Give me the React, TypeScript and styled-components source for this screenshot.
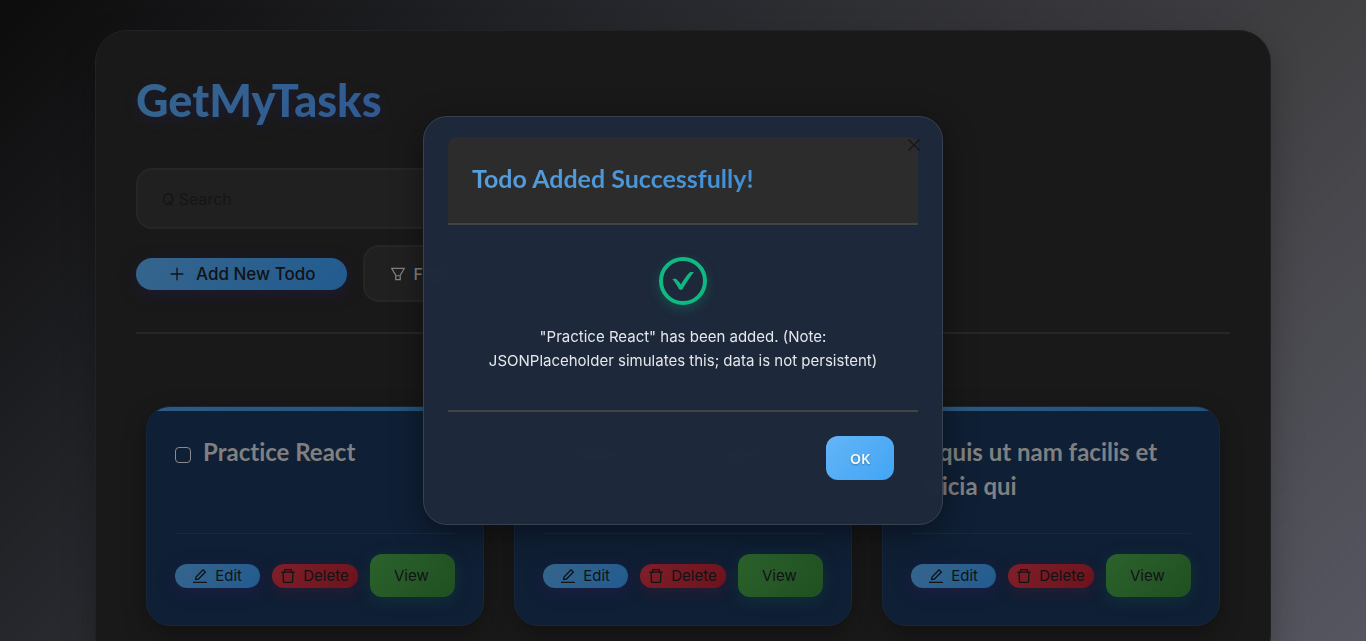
import React from "react";
import styled, { createGlobalStyle } from "styled-components";
import {
  AiOutlineClose,
  AiOutlineDelete,
  AiOutlineEdit,
  AiOutlineFilter,
  AiOutlinePlus,
} from "react-icons/ai";

const headingFont = `Lato, "Liberation Sans", sans-serif`;
const bodyFont = `Inter, "Liberation Sans", sans-serif`;

const GlobalStyle = createGlobalStyle`
  *, *::before, *::after { box-sizing: border-box; }
  html, body { height: 100%; }
  body {
    margin: 0;
    overflow: hidden;
    font-family: ${bodyFont};
    font-size: 16px;
    color: #808080;
    background: linear-gradient(135deg, #0c0c0c 0%, #26272c 32%, #414144 68%, #565661 100%) fixed;
  }
  button, input { font-family: inherit; }
  h1, h2, p { margin: 0; }
`;

const Page = styled.div`
  padding: 30px 95px;
`;

const Container = styled.main`
  padding: 40px;
  border: 1px solid #222222;
  border-radius: 32px;
  background: #191919;
  box-shadow: 0 12px 32px rgba(0, 0, 0, 0.25);
`;

const AppTitle = styled.h1`
  display: inline-block;
  font-family: ${headingFont};
  font-size: 45px;
  font-weight: 900;
  line-height: 58px;
  color: transparent;
  background: linear-gradient(135deg, #35658f, #2f5a92);
  background-clip: text;
  -webkit-background-clip: text;
  filter: drop-shadow(0 4px 6px rgba(38, 30, 84, 0.4));
`;

const Toolbar = styled.header`
  display: flex;
  flex-direction: column;
  align-items: flex-start;
  border-bottom: 2px solid #272727;
  padding-bottom: 30px;
`;

const SearchInput = styled.input`
  width: 100%;
  max-width: 500px;
  height: 61px;
  margin-top: 39px;
  padding: 0 24px;
  border: 2px solid #262626;
  border-radius: 16px;
  background: #202020;
  color: #808080;
  font-size: 16px;
  outline: none;
  &::placeholder {
    color: #151515;
    opacity: 1;
  }
`;

const Actions = styled.div`
  display: flex;
  align-items: center;
  gap: 16px;
  margin-top: 16px;
`;

const AddButton = styled.button`
  display: flex;
  align-items: center;
  gap: 10px;
  height: 32px;
  padding: 0 32px;
  border: 0;
  border-radius: 16px;
  background: linear-gradient(135deg, #35658c, #225b90);
  color: #101214;
  font-size: 17px;
  font-weight: 500;
  box-shadow: 0 4px 16px rgba(32, 28, 76, 0.5);
`;

const FilterButton = styled.button`
  display: flex;
  align-items: center;
  gap: 6px;
  height: 57px;
  padding: 0 24px;
  border: 2px solid #262626;
  border-radius: 16px;
  background: #202020;
  color: #808080;
  font-size: 16px;
  font-weight: 500;
`;

const CardGrid = styled.section`
  display: grid;
  grid-template-columns: repeat(3, minmax(0, 1fr));
  gap: 30px;
  margin-top: 72px;
  padding: 0 10px;
`;

const Card = styled.article`
  display: flex;
  flex-direction: column;
  padding: 28px;
  border: 1px solid #16263a;
  border-radius: 24px;
  background:
    linear-gradient(90deg, #2f5b80, #22527c) top / 100% 4px no-repeat,
    #0f1f35;
  box-shadow: 0 8px 24px rgba(0, 0, 0, 0.3);
`;

const CardTitle = styled.h2`
  margin-bottom: 30px;
  font-family: ${headingFont};
  font-size: 24px;
  font-weight: 700;
  font-variant-ligatures: none;
  line-height: 34px;
  color: #808080;
`;

const Checkbox = styled.input`
  appearance: none;
  width: 16px;
  height: 16px;
  margin: 0 12px 0 0;
  vertical-align: -2px;
  border: 1px solid #8b8b8b;
  border-radius: 4px;
`;

const CardActions = styled.div`
  display: grid;
  grid-template-columns: repeat(3, minmax(0, 1fr));
  align-items: center;
  gap: 12px;
  margin-top: auto;
  padding-top: 20px;
  border-top: 1px solid #1f2730;
`;

const tones = {
  edit: { fill: "#35658c, #225b90", glow: "rgba(40, 30, 84, 0.5)" },
  remove: { fill: "#7f1f2a, #6d131c", glow: "rgba(100, 20, 50, 0.3)" },
  view: { fill: "#2b622c, #205021", glow: "rgba(20, 80, 60, 0.35)" },
};

const CardButton = styled.button<{ $tone: keyof typeof tones }>`
  display: flex;
  align-items: center;
  justify-content: center;
  gap: 6px;
  height: ${({ $tone }) => ($tone === "view" ? 43 : 24)}px;
  padding: 0 2px 0 0;
  border: 0;
  border-radius: 12px;
  background: linear-gradient(135deg, ${({ $tone }) => tones[$tone].fill});
  box-shadow: 0 4px 16px ${({ $tone }) => tones[$tone].glow};
  color: #111315;
  font-size: 15px;
`;

const Overlay = styled.div`
  position: fixed;
  inset: 0;
  display: flex;
  align-items: center;
  justify-content: center;
  padding: 16px;
`;

const Modal = styled.div`
  position: relative;
  width: 100%;
  max-width: 520px;
  padding: 20px 24px;
  border: 1px solid #37414f;
  border-radius: 24px;
  background: rgba(30, 41, 59, 0.98);
  backdrop-filter: blur(10px);
  box-shadow: 0 8px 32px rgba(0, 0, 0, 0.4);
`;

const CloseButton = styled.button`
  position: absolute;
  top: 17px;
  right: 17px;
  display: flex;
  align-items: center;
  justify-content: center;
  width: 22px;
  height: 22px;
  padding: 0;
  border: 0;
  background: none;
  color: #15181d;
`;

const ModalHeader = styled.div`
  padding: 22px 24px 26px;
  border-bottom: 2px solid #434343;
  border-radius: 8px 8px 0 0;
  background: #2c2c2c;
`;

const ModalTitle = styled.h2`
  width: fit-content;
  font-family: ${headingFont};
  font-size: 25px;
  font-weight: 700;
  line-height: 38px;
  color: transparent;
  background: linear-gradient(135deg, #5a9fdb, #3f8fd6);
  background-clip: text;
  -webkit-background-clip: text;
`;

const ModalBody = styled.div`
  display: flex;
  flex-direction: column;
  align-items: center;
  gap: 20px;
  padding: 32px 32px 37px;
  text-align: center;
  font-size: 15px;
  line-height: 24px;
  color: #e4e7eb;
`;

const SuccessBadge = styled.span`
  display: flex;
  width: 48px;
  height: 48px;
  border: 4px solid #10b981;
  border-radius: 50%;
  color: #10b981;
  box-shadow: 0 4px 12px rgba(16, 185, 129, 0.25);
`;

const ModalFooter = styled.div`
  display: flex;
  justify-content: flex-end;
  padding: 24px;
  border-top: 2px solid #434343;
`;

const OkButton = styled.button`
  height: 44px;
  padding: 0 24px;
  border: 0;
  border-radius: 12px;
  background: linear-gradient(135deg, #64b5f6, #42a5f5);
  color: #f4f8fc;
  font-family: "Noto Sans", sans-serif;
  font-size: 14px;
  font-weight: 600;
  text-shadow: 0 1px 2px rgba(0, 0, 0, 0.3);
`;

const todos = ["Practice React", "delectus aut autem", "quis ut nam facilis et officia qui"];

export default function App() {
  return (
    <>
      <GlobalStyle />
      <Page>
        <Container>
          <Toolbar>
            <AppTitle>GetMyTasks</AppTitle>
            <SearchInput type="text" aria-label="Search" placeholder="Q Search" />
            <Actions>
              <AddButton type="button">
                <AiOutlinePlus size={18} />
                Add New Todo
              </AddButton>
              <FilterButton type="button">
                <AiOutlineFilter size={18} />
                Filter
              </FilterButton>
            </Actions>
          </Toolbar>
          <CardGrid>
            {todos.map((todo) => (
              <Card key={todo}>
                <CardTitle>
                  <Checkbox type="checkbox" aria-label={todo} />
                  {todo}
                </CardTitle>
                <CardActions>
                  <CardButton type="button" $tone="edit">
                    <AiOutlineEdit size={18} />
                    Edit
                  </CardButton>
                  <CardButton type="button" $tone="remove">
                    <AiOutlineDelete size={18} />
                    Delete
                  </CardButton>
                  <CardButton type="button" $tone="view">
                    View
                  </CardButton>
                </CardActions>
              </Card>
            ))}
          </CardGrid>
        </Container>
      </Page>
      <Overlay>
        <Modal role="dialog" aria-modal="true" aria-labelledby="modal-title">
          <ModalHeader>
            <ModalTitle id="modal-title">Todo Added Successfully!</ModalTitle>
          </ModalHeader>
          <CloseButton type="button" aria-label="Close">
            <AiOutlineClose size={18} />
          </CloseButton>
          <ModalBody>
            <SuccessBadge>
              <svg width="40" height="40" viewBox="0 0 40 40" fill="currentColor" aria-hidden="true">
                <path d="M9.500 18.200L10 17.800H12.800L13.600 18.300C15 19.700 16.700 21.600 18 23.600C20.300 19.400 23.200 15 26.500 11.600L27.800 11H30.900C26.800 16 23.200 22 19.600 28L18.600 28.800H17L16 28C14.200 24.600 12 21 9.500 18.200Z" />
              </svg>
            </SuccessBadge>
            <p>
              "Practice React" has been added. (Note: JSONPlaceholder simulates this; data is not
              persistent)
            </p>
          </ModalBody>
          <ModalFooter>
            <OkButton type="button">OK</OkButton>
          </ModalFooter>
        </Modal>
      </Overlay>
    </>
  );
}
